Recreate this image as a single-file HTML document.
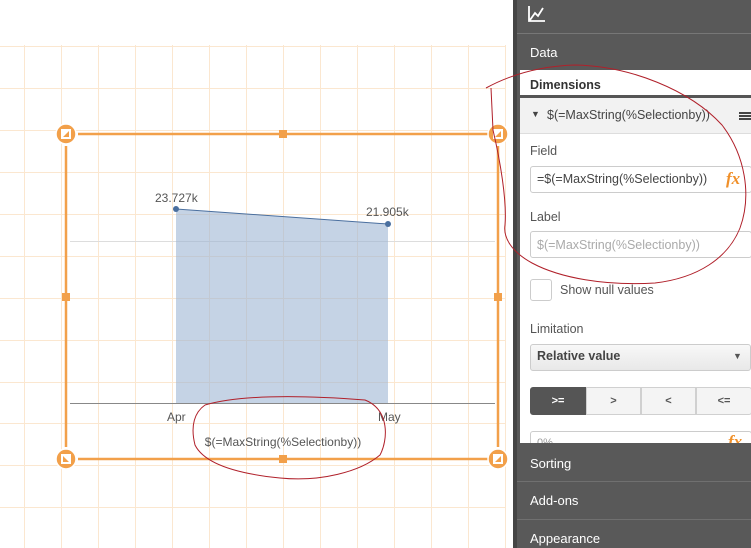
<!DOCTYPE html>
<html><head><meta charset="utf-8"><style>
*{margin:0;padding:0;box-sizing:border-box}
body{width:751px;height:548px;overflow:hidden;background:#fff;font-family:"Liberation Sans",sans-serif;position:relative}
.a{position:absolute}
.side{left:513px;top:0;width:238px;height:548px;background:#595959;border-left:4px solid #454545}
.t{position:absolute;font-size:12.5px;color:#404040;white-space:nowrap}
.w{color:#fff;font-size:13px}
.inp{position:absolute;background:#fff;border:1px solid #ccc;border-radius:3px}
.fx{position:absolute;color:#f0902a;font-family:"Liberation Serif",serif;font-style:italic;font-weight:bold;font-size:17px}
.btn{position:absolute;top:387px;height:28px;background:#f4f4f4;border:1px solid #d0d0d0;font-size:11px;font-weight:bold;color:#555;text-align:center;line-height:26px}
</style></head><body>
<svg class="a" style="left:0;top:0" width="513" height="548">
<g stroke="#fbe7d0" stroke-width="1">
<path d="M24.5 45V548M61.5 45V548M98.5 45V548M135.5 45V548M172.5 45V548M209.5 45V548M246.5 45V548M283.5 45V548M320.5 45V548M357.5 45V548M394.5 45V548M431.5 45V548M468.5 45V548M505.5 45V548"/>
<path d="M0 46.5H505M0 88.5H505M0 130.5H505M0 172.5H505M0 214.5H505M0 256.5H505M0 298.5H505M0 340.5H505M0 382.5H505M0 423.5H505M0 465.5H505M0 507.5H505"/>
</g>
<line x1="70" y1="241.5" x2="495" y2="241.5" stroke="#ddd"/>
<polygon points="176,209 388,224 388,403 176,403" fill="#9fb5d3" fill-opacity="0.6"/>
<line x1="176" y1="209" x2="388" y2="224" stroke="#4a6f9f" stroke-width="1"/>
<circle cx="176" cy="209" r="3" fill="#4a6f9f"/><circle cx="388" cy="224" r="3" fill="#4a6f9f"/>
<line x1="70" y1="403.5" x2="495" y2="403.5" stroke="#888"/>
<text x="155" y="202" font-size="12" fill="#555" font-family="Liberation Sans">23.727k</text>
<text x="366" y="216" font-size="12" fill="#555" font-family="Liberation Sans">21.905k</text>
<text x="167" y="421" font-size="12" fill="#555" font-family="Liberation Sans">Apr</text>
<text x="378" y="421" font-size="12" fill="#555" font-family="Liberation Sans">May</text>
<text x="283" y="446" font-size="12" fill="#555" text-anchor="middle" font-family="Liberation Sans">$(=MaxString(%Selectionby))</text>
<g stroke="#f2a04a" stroke-width="2.5" fill="none">
<path d="M78 134H488M78 459H488M66 146V447M498 146V447"/></g>
<g fill="#f2a04a"><rect x="279" y="130" width="8" height="8"/><rect x="279" y="455" width="8" height="8"/><rect x="62" y="293" width="8" height="8"/><rect x="494" y="293" width="8" height="8"/></g>
<g fill="#f2a04a" stroke="#fff" stroke-width="1.5">
<circle cx="66" cy="134" r="10"/><circle cx="498" cy="134" r="10"/><circle cx="66" cy="459" r="10"/><circle cx="498" cy="459" r="10"/></g>
<g fill="#fff">
<path d="M61 129h10v10h-10z M63 137L69 131L69 137Z" fill-rule="evenodd"/>
<path d="M61 454h10v10h-10z M63 456L69 462L63 462Z" fill-rule="evenodd"/>
<path d="M493 454h10v10h-10z M495 462L501 456L501 462Z" fill-rule="evenodd"/>
<path d="M493 129h10v10h-10z M495 137L501 131L501 137Z" fill-rule="evenodd"/>
</g>
</svg>
<div class="a side"></div>
<svg class="a" style="left:525px;top:4px" width="24" height="22"><path d="M4 2V17H20M5 16L10 9L13 12L18 4" stroke="#fff" stroke-width="1.8" fill="none"/></svg>
<div class="a" style="left:517px;top:33px;width:234px;height:1px;background:#777"></div>
<div class="t w" style="left:530px;top:45px">Data</div>
<div class="a" style="left:520px;top:70px;width:231px;height:373px;background:#fff"></div>
<div class="t" style="left:530px;top:78px;font-weight:bold;color:#333">Dimensions</div>
<div class="a" style="left:520px;top:95px;width:231px;height:3px;background:#555"></div>
<div class="a" style="left:520px;top:98px;width:231px;height:36px;background:#f2f2f2;border-bottom:1px solid #ddd"></div>
<div class="t" style="left:531px;top:109px;font-size:9px;color:#444">▼</div>
<div class="t" style="left:547px;top:108px;color:#444">$(=MaxString(%Selectionby))</div>
<div class="a" style="left:739px;top:112px;width:12px;height:2px;background:#444;box-shadow:0 3px 0 #444,0 6px 0 #444"></div>
<div class="t" style="left:530px;top:144px;color:#555">Field</div>
<div class="inp" style="left:530px;top:166px;width:222px;height:27px"></div>
<div class="t" style="left:537px;top:172px;color:#444">=$(=MaxString(%Selectionby))</div>
<div class="fx" style="left:726px;top:169px">fx</div>
<div class="t" style="left:530px;top:210px;color:#555">Label</div>
<div class="inp" style="left:530px;top:231px;width:222px;height:27px"></div>
<div class="t" style="left:537px;top:238px;color:#aaa">$(=MaxString(%Selectionby))</div>
<div class="inp" style="left:530px;top:279px;width:22px;height:22px"></div>
<div class="t" style="left:560px;top:283px;color:#555">Show null values</div>
<div class="t" style="left:530px;top:322px;color:#555">Limitation</div>
<div class="a" style="left:530px;top:344px;width:221px;height:27px;border:1px solid #ccc;border-radius:3px;background:linear-gradient(#f8f8f8,#e8e8e8)"></div>
<div class="t" style="left:537px;top:349px;font-weight:bold;color:#444">Relative value</div>
<div class="t" style="left:733px;top:351px;font-size:9px;color:#555">▼</div>
<div class="btn" style="left:530px;width:56px;background:#555;color:#fff;border-color:#555;border-radius:3px 0 0 3px">&gt;=</div>
<div class="btn" style="left:586px;width:55px">&gt;</div>
<div class="btn" style="left:641px;width:55px">&lt;</div>
<div class="btn" style="left:696px;width:56px;border-radius:0 3px 3px 0">&lt;=</div>
<div class="inp" style="left:530px;top:431px;width:222px;height:20px"></div>
<div class="t" style="left:537px;top:437px;color:#999;font-size:11px">0%</div>
<div class="fx" style="left:728px;top:432px">fx</div>
<div class="a" style="left:517px;top:443px;width:234px;height:105px;background:#595959"></div>
<div class="t w" style="left:530px;top:456px">Sorting</div>
<div class="a" style="left:517px;top:481px;width:234px;height:1px;background:#707070"></div>
<div class="t w" style="left:530px;top:493px">Add-ons</div>
<div class="a" style="left:517px;top:519px;width:234px;height:1px;background:#707070"></div>
<div class="t w" style="left:530px;top:531px">Appearance</div>
<svg class="a" style="left:0;top:0" width="751" height="548">
<g fill="none" stroke="#b0202a" stroke-width="1">
<path d="M205 405C240 395 300 395 365 400C390 410 388 440 380 455C360 472 320 482 280 478C240 474 205 465 195 445C190 425 195 412 205 405"/>
<path d="M486 88C510 75 540 66 575 65C630 66 690 90 722 125C745 155 752 195 740 228C728 258 698 278 655 283C605 286 560 278 532 263C512 252 503 238 505 225C507 200 500 160 493 130L491 88"/>
</g>
</svg>
</body></html>
